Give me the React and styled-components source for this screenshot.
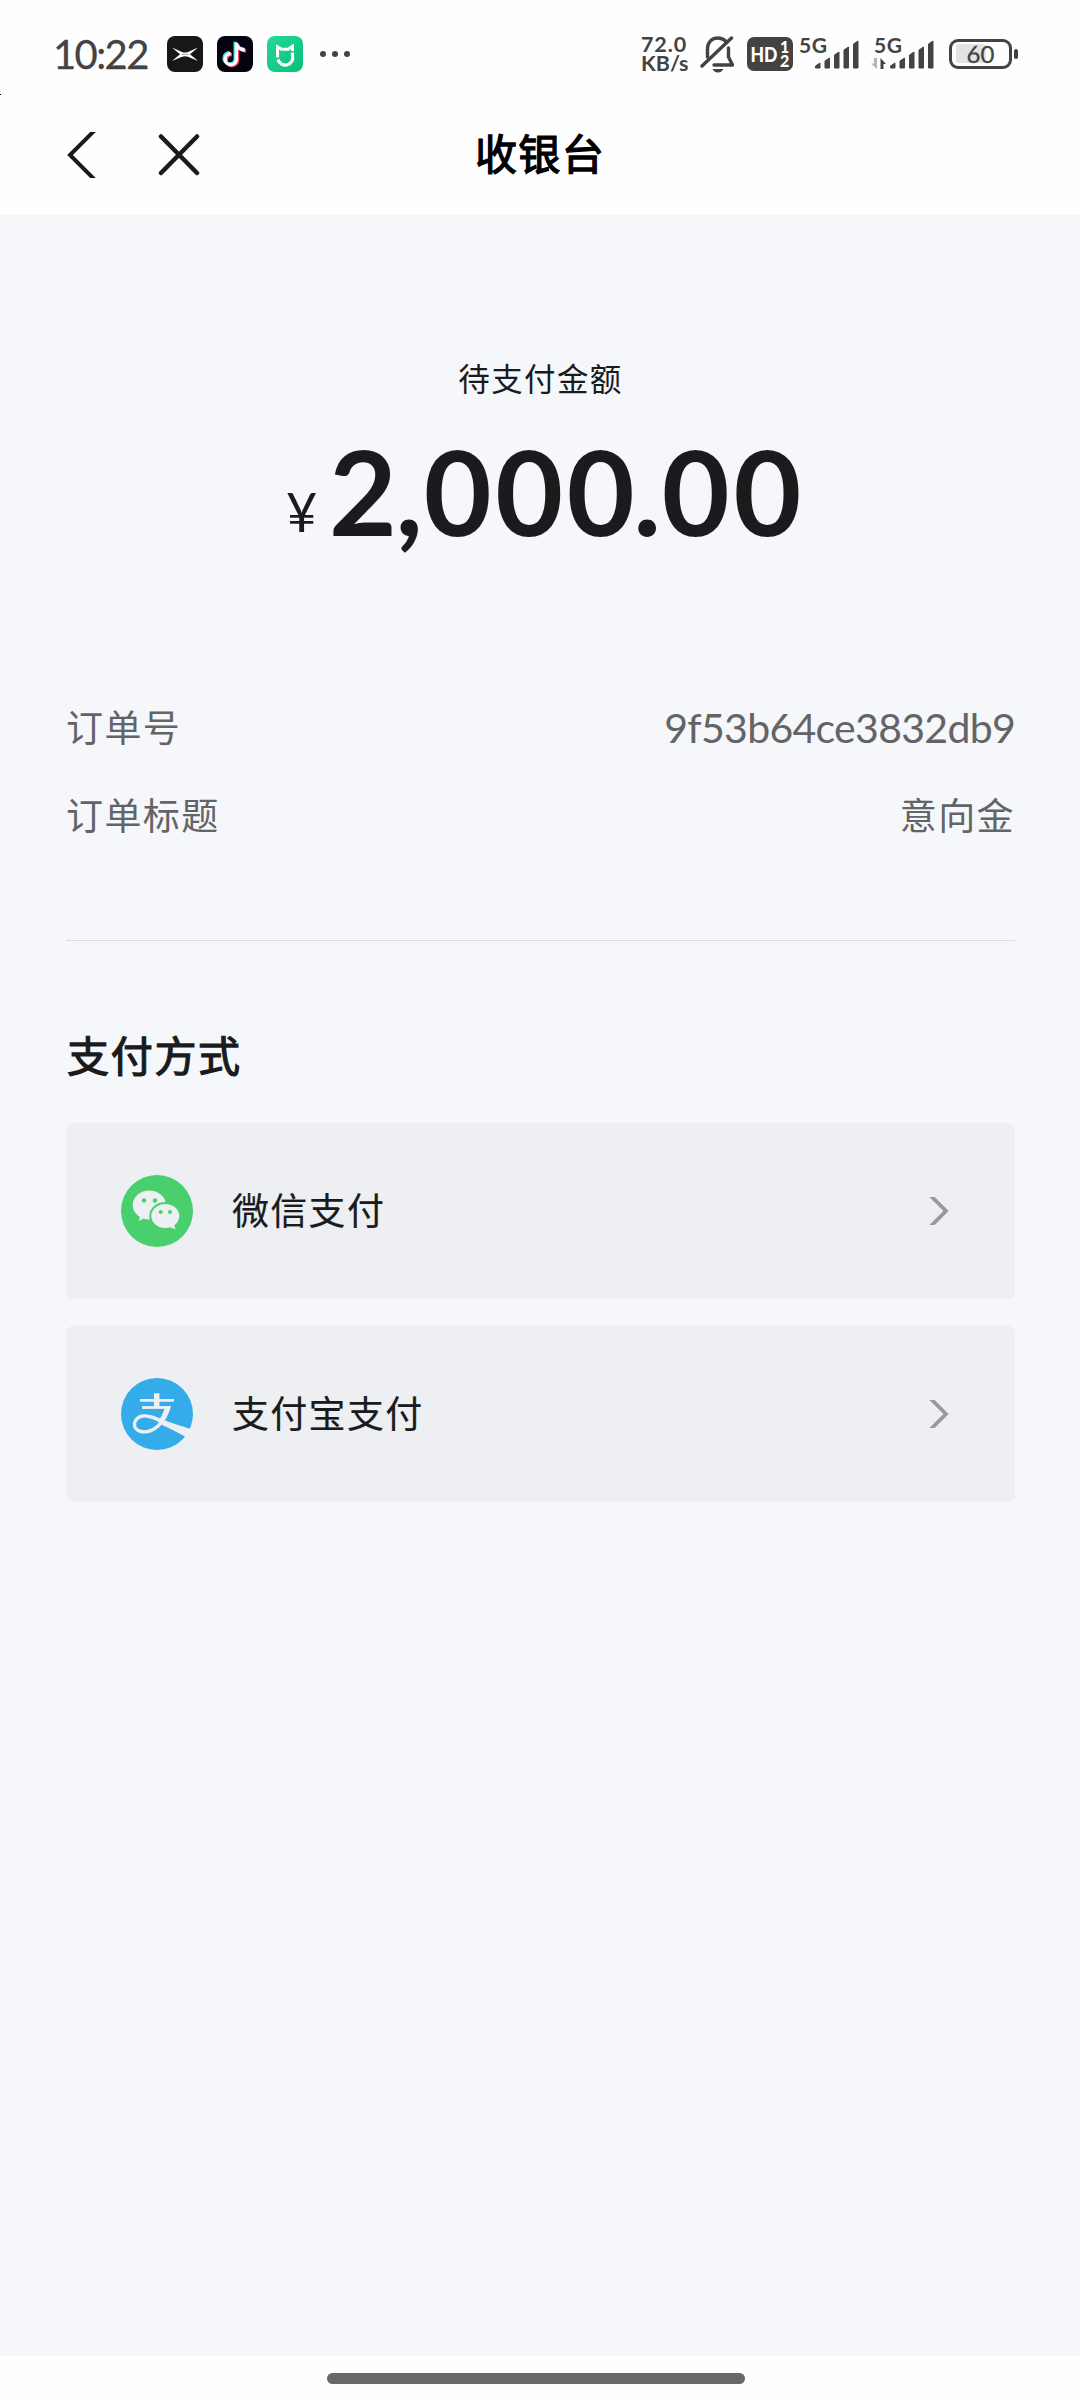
import styled, { createGlobalStyle } from "styled-components";

const GlobalStyle = createGlobalStyle`
    * {
        box-sizing: border-box;
    }

    body {
        margin: 0;
        background: #fefefe;
        font-family: Lato, "Noto Sans CJK SC", sans-serif;
        color: #1a1b1c;
    }

    svg {
        display: block;
        flex: none;
    }
`;

const Screen = styled.div`
    position: relative;
    width: 1080px;
    height: 2400px;
    display: flex;
    flex-direction: column;
    overflow: hidden;
`;

const Speck = styled.span`
    position: absolute;
    left: 0;
    top: 94px;
    width: 1px;
    height: 1px;
    background: #000;
`;

const StatusBar = styled.header`
    height: 108px;
    padding: 0 62px 0 53px;
    display: flex;
    align-items: center;
    justify-content: space-between;
    color: #434343;
`;

const StatusGroup = styled.div`
    display: flex;
    align-items: center;
    height: 108px;
`;

const Clock = styled.span`
    width: 114px;
    font-size: 40px;
    line-height: 40px;
    letter-spacing: -1.6px;
    white-space: nowrap;
    -webkit-text-stroke: 0.3px;
`;

const AppIcons = styled.div`
    display: flex;
    gap: 14px;
    margin-right: 16px;
`;

const NetSpeed = styled.div`
    width: 59px;
    font-size: 21.5px;
    font-weight: 700;
    line-height: 19px;
    white-space: nowrap;

    > div:first-child {
        letter-spacing: 0.9px;
    }
`;

const SignalGroup = styled.div`
    display: flex;
    align-items: center;
    gap: 6px;
    margin: 0 13px 0 11px;
`;

const SignalIcon = styled.svg`
    overflow: visible;

    & + & {
        margin-left: 7px;
    }
`;

const NavBar = styled.nav`
    height: 107px;
    padding: 0 66px;
    display: grid;
    grid-template-columns: 1fr auto 1fr;
    align-items: center;
`;

const NavButtons = styled.div`
    display: flex;
    gap: 62px;
    padding-bottom: 13px;
`;

const Title = styled.h1`
    margin: 0;
    padding-bottom: 15px;
    font-size: 42px;
    line-height: 60px;
    font-weight: 400;
    letter-spacing: 1.4px;
    color: #000;
    -webkit-text-stroke: 1.3px;
`;

const Body = styled.main`
    flex: 1;
    padding: 140px 65px 0 66px;
    background: #f5f7fb;
`;

const AmountLabel = styled.div`
    text-align: center;
    font-size: 31.5px;
    line-height: 48px;
    letter-spacing: 1.4px;
`;

const Amount = styled.div`
    display: flex;
    justify-content: center;
    align-items: flex-start;
    height: 140px;
    margin-top: 18px;
    padding-left: 10px;
    font-size: 117px;
    line-height: 140px;
    font-weight: 700;
    letter-spacing: 3.7px;
`;

const Currency = styled.span`
    margin-right: 8px;
    font-size: 54px;
    line-height: 182px;
    font-weight: 400;
`;

const Mark = styled.span`
    margin: 0 -3px 0 -5px;
`;

const OrderInfo = styled.dl`
    margin: 123px 0 0;
    padding-bottom: 80px;
    border-bottom: 1px solid #d9dbe0;
`;

const OrderRow = styled.div`
    display: flex;
    justify-content: space-between;
    height: 88px;
    line-height: 88px;
    font-size: 37px;
    letter-spacing: 1.4px;
    color: #636466;

    dt, dd {
        margin: 0;
    }
`;

const OrderNo = styled.dd`
    font-size: 41px;
    letter-spacing: -0.7px;
`;

const SectionTitle = styled.h2`
    margin: 84px 0 36px;
    padding-left: 1px;
    font-size: 42px;
    line-height: 62px;
    font-weight: 400;
    letter-spacing: 1.7px;
    -webkit-text-stroke: 1.2px;
`;

const PayList = styled.div`
    display: flex;
    flex-direction: column;
    gap: 27px;
`;

const PayButton = styled.button`
    display: flex;
    align-items: center;
    width: 100%;
    height: 176px;
    padding: 0 66px 0 55px;
    border: 0;
    border-radius: 7px;
    background: #edeff3;
    font-family: inherit;
    color: inherit;
`;

const PayName = styled.span`
    flex: 1;
    margin-left: 39px;
    text-align: left;
    font-size: 37px;
    line-height: 56px;
    letter-spacing: 1.3px;
    -webkit-text-stroke: 0.2px;
`;

const GestureBar = styled.footer`
    height: 44px;
    padding-top: 17px;
    background: #fefefe;

    &::after {
        content: "";
        display: block;
        width: 418px;
        height: 11px;
        margin: 0 auto 0 327px;
        border-radius: 6px;
        background: #686868;
    }
`;

const CarIcon = () => (
    <svg width="36" height="36" viewBox="0 0 36 36">
        <rect width="36" height="36" rx="8" fill="#171815" />
        <path d="M5 11.5L15 16Q18 17 21 16L31 11.5L23 18.3L31 25L21 20.7Q18 19.7 15 20.7L5 25L13 18.3Z" fill="#fff" />
        <path d="M14.5 18.3H21.5" stroke="#171815" strokeWidth="0.4" />
    </svg>
);

const notePath = "M19 6.5V23a5.6 5.6 0 1 1-5.6-5.6M19 7c.6 4 3 6.5 8.5 6.8";

const TiktokIcon = () => (
    <svg width="36" height="36" viewBox="0 0 36 36" fill="none" strokeWidth="3.4">
        <rect width="36" height="36" rx="8" fill="#05030f" />
        <path d={notePath} stroke="#36e4e6" transform="translate(-0.8 -0.8)" />
        <path d={notePath} stroke="#f53a5c" transform="translate(1.6 1.2)" />
        <path d={notePath} stroke="#fff" transform="translate(0.4 0.2)" />
    </svg>
);

const HomeIcon = () => (
    <svg width="36" height="36" viewBox="0 0 36 36" fill="none">
        <defs>
            <linearGradient id="home" x1="0" y1="0" x2="1" y2="1">
                <stop offset="0" stopColor="#25d99b" />
                <stop offset="1" stopColor="#08bf76" />
            </linearGradient>
        </defs>
        <rect width="36" height="36" rx="8" fill="url(#home)" />
        <path d="M10.5 21.5V10.8L14.5 13.2H21L25.5 10.2V15" stroke="#fff" strokeWidth="3" />
        <path d="M25.5 16.5V19.5A7.5 7.5 0 0 1 11 23.5" stroke="#fff" strokeWidth="3.2" />
    </svg>
);

const MoreDots = () => (
    <svg width="32" height="8" viewBox="0 0 32 8" fill="#434343">
        <circle cx="4" cy="4" r="3" />
        <circle cx="16" cy="4" r="3" />
        <circle cx="28" cy="4" r="3" />
    </svg>
);

const MuteIcon = () => (
    <svg width="36" height="38" viewBox="0 0 36 38" fill="none" stroke="#434343" strokeWidth="3.4">
        <path d="M7.5 22V14C7.5 7 12 3 18 3C21 3 23.5 4 25.5 6M28.5 13V22L32.5 30H14" strokeLinejoin="round" strokeLinecap="round" />
        <path d="M2 31L31.5 3" strokeLinecap="round" />
        <path d="M12.5 34H23.5Q21.5 37.5 18 37.5T12.5 34Z" fill="#434343" stroke="none" />
    </svg>
);

const HdIcon = () => (
    <svg width="46" height="34" viewBox="0 0 46 34" fill="#fff" fontFamily="Lato, sans-serif" fontWeight="900">
        <rect width="46" height="34" rx="7" fill="#434343" />
        <text x="3.5" y="24.5" fontSize="21" textLength="27" lengthAdjust="spacingAndGlyphs">HD</text>
        <text x="33" y="15.5" fontSize="16">1</text>
        <text x="33" y="30" fontSize="16">2</text>
    </svg>
);

// bars start 16px in, the network label hangs over their left edge
const Signal = ({ arrows }) => (
    <SignalIcon width="62" height="36" viewBox="0 0 62 36" fill="#434343">
        <text x="0" y="17" fontFamily="Lato, sans-serif" fontSize="21" fontWeight="700" letterSpacing="0.6">5G</text>
        {arrows && <path d="M3 22V33L-3 27.5H0V22Z" fill="#b5b5b5" />}
        {arrows && <path d="M6.5 33V22L12 28H9.5V33Z" />}
        {[6, 11, 17, 22, 28].map((h, i) => (
            <path
                key={h}
                d={`M${16.5 + i * 9.5} 32V${36 - h}L${21 + i * 9.5} ${33 - h}V32Z`}
                stroke="#434343"
                strokeWidth="1"
                strokeLinejoin="round"
            />
        ))}
    </SignalIcon>
);

const Battery = () => (
    <svg width="69" height="30" viewBox="0 0 69 30">
        <rect x="1.5" y="1.5" width="60" height="27" rx="7.5" fill="none" stroke="#434343" strokeWidth="3" />
        <rect x="7" y="5" width="30" height="19" rx="3" fill="#e3e3e3" />
        <rect x="65" y="10" width="4" height="10" rx="2" fill="#434343" />
        <text x="31.5" y="23.5" textAnchor="middle" fontFamily="Lato, sans-serif" fontSize="24" fill="#434343" stroke="#434343" strokeWidth="0.3">60</text>
    </svg>
);

const BackIcon = () => (
    <svg width="30" height="46" viewBox="0 0 30 46" fill="none">
        <path d="M31 -4L4 23L31 50" stroke="#1a1b1c" strokeWidth="4" />
    </svg>
);

const CloseIcon = () => (
    <svg width="42" height="46" viewBox="0 0 42 46" fill="none">
        <path d="M3 4.5L39 41M39 4.5L3 41" stroke="#1a1b1c" strokeWidth="4.5" strokeLinecap="round" />
    </svg>
);

const WechatIcon = () => (
    <svg width="72" height="72" viewBox="0 0 72 72" fill="#edeff3">
        <circle cx="36" cy="36" r="36" fill="#49cf6d" />
        <ellipse cx="28.3" cy="30" rx="16.6" ry="14.5" />
        <path d="M19.5 40L17.5 46L24.5 42.5Z" />
        <ellipse cx="44.3" cy="41" rx="15" ry="13" stroke="#49cf6d" strokeWidth="2" />
        <path d="M47.5 51.5L54.5 54.5L52.5 48Z" />
        <g fill="#49cf6d">
            <circle cx="23" cy="25.5" r="2.2" />
            <circle cx="34" cy="25.5" r="2.2" />
            <circle cx="39.7" cy="37" r="2" />
            <circle cx="49" cy="37" r="2" />
        </g>
    </svg>
);

const AlipayIcon = () => (
    <svg width="72" height="72" viewBox="0 0 72 72" fill="none" stroke="#edeff3">
        <circle cx="36" cy="36" r="36" fill="#34ace9" stroke="none" />
        <path d="M35.7 15.3V29" strokeWidth="5.5" />
        <path d="M19 22.3H53" strokeWidth="2.8" />
        <path d="M21 29.5H49" strokeWidth="2.8" />
        <path d="M48 28.5C45.5 37 42.5 43 37 48C31 53.5 25 54.5 20 53.5C10.5 51.5 11.5 39.5 22 38C29 37.2 36 41 44 45" strokeWidth="3.4" />
        <path d="M44 28.3H50C48 35 45.5 40 42 44L38 42C41 38 43 33.5 44 28.3ZM33 39.5C40 40.5 47 44 70 51L72 56L65 59C56 54 48 50 40 46.5Z" fill="#edeff3" stroke="none" />
    </svg>
);

const Chevron = () => (
    <svg width="20" height="28" viewBox="0 0 20 28" fill="none">
        <path d="M-1 -4L17 14L-1 32" stroke="#98999b" strokeWidth="3.8" />
    </svg>
);

const methods = [
    { name: "微信支付", icon: <WechatIcon /> },
    { name: "支付宝支付", icon: <AlipayIcon /> },
];

const App = () => {
    return (
        <>
            <GlobalStyle />
            <Screen>
                <Speck />
                <StatusBar>
                    <StatusGroup>
                        <Clock>10:22</Clock>
                        <AppIcons>
                            <CarIcon />
                            <TiktokIcon />
                            <HomeIcon />
                        </AppIcons>
                        <MoreDots />
                    </StatusGroup>
                    <StatusGroup>
                        <NetSpeed>
                            <div>72.0</div>
                            <div>KB/s</div>
                        </NetSpeed>
                        <MuteIcon />
                        <SignalGroup>
                            <HdIcon />
                            <Signal />
                            <Signal arrows />
                        </SignalGroup>
                        <Battery />
                    </StatusGroup>
                </StatusBar>
                <NavBar>
                    <NavButtons>
                        <BackIcon />
                        <CloseIcon />
                    </NavButtons>
                    <Title>收银台</Title>
                </NavBar>
                <Body>
                    <AmountLabel>待支付金额</AmountLabel>
                    <Amount>
                        <Currency>¥</Currency>
                        <span>2<Mark>,</Mark>000<Mark>.</Mark>00</span>
                    </Amount>
                    <OrderInfo>
                        <OrderRow>
                            <dt>订单号</dt>
                            <OrderNo>9f53b64ce3832db9</OrderNo>
                        </OrderRow>
                        <OrderRow>
                            <dt>订单标题</dt>
                            <dd>意向金</dd>
                        </OrderRow>
                    </OrderInfo>
                    <SectionTitle>支付方式</SectionTitle>
                    <PayList>
                        {methods.map((method) => (
                            <PayButton key={method.name}>
                                {method.icon}
                                <PayName>{method.name}</PayName>
                                <Chevron />
                            </PayButton>
                        ))}
                    </PayList>
                </Body>
                <GestureBar />
            </Screen>
        </>
    );
};

export default App;
